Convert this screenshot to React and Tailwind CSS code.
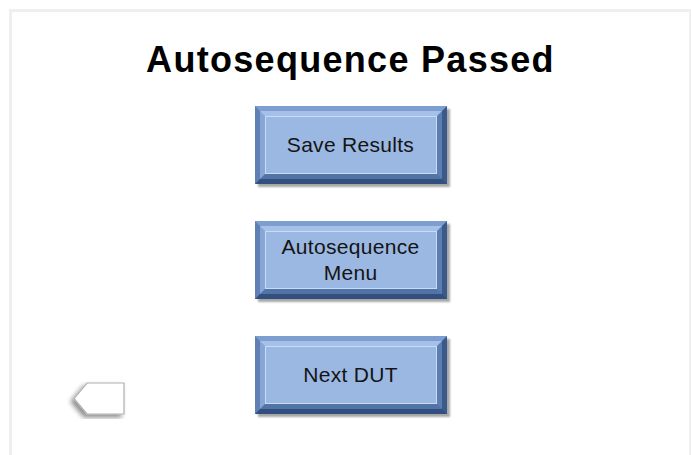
export default function App() {
  const buttons = [
    { label: 'Save Results' },
    { label: 'Autosequence', sub: 'Menu' },
    { label: 'Next DUT' },
  ]

  return (
    <div className="w-[691px] h-[455px] bg-white overflow-hidden pt-[9px] pl-[9px]" style={{ fontFamily: '"Liberation Sans", Arial, sans-serif' }}>
      <div className="h-[446px] border-t-[3px] border-l-[3px] border-r-[2px] border-[#efefef] bg-white flex flex-col items-center pt-[28px]">
        <h1 className="text-[36px] leading-[40px] font-bold text-black tracking-[1.3px]">Autosequence Passed</h1>

        <div className="flex flex-col gap-[37px] mt-[26px] w-full">
          {buttons.map((b, i) => (
            <div key={i} className="grid grid-cols-[1fr_auto_1fr] w-full">
              <div className="flex items-end pl-[54px]">
                {i === 2 && <BackArrow />}
              </div>
              <BevelButton label={b.label} sub={b.sub} />
              <div />
            </div>
          ))}
        </div>
      </div>
    </div>
  )
}

function BevelButton({ label, sub }) {
  return (
    <div className="w-[192px] h-[78px] border-[5px] border-t-[#7f9ed0] border-l-[#5f80b5] border-r-[#3a5a8c] border-b-[#324f7e] shadow-[3px_3px_2px_rgba(0,0,0,0.35)]">
      <div className="w-full h-full border-[5px] border-t-[#a6c0e9] border-l-[#87a5d5] border-r-[#5c7db0] border-b-[#5273a6]">
        <div className="w-full h-full bg-[#9bb8e3] border border-[#c9dcf6] flex flex-col items-center justify-center text-[21px] leading-[26px] text-[#141414] tracking-[0.3px]">
          <span>{label}</span>
          {sub && <span>{sub}</span>}
        </div>
      </div>
    </div>
  )
}

function BackArrow() {
  return (
    <svg width="62" height="38" viewBox="0 0 62 38" className="-mb-[5px]">
      <defs>
        <filter id="sh" x="-30%" y="-30%" width="160%" height="160%">
          <feGaussianBlur in="SourceAlpha" stdDeviation="2.5" />
          <feOffset dx="-3" dy="3" result="b" />
          <feComponentTransfer>
            <feFuncA type="linear" slope="0.45" />
          </feComponentTransfer>
          <feMerge>
            <feMergeNode />
            <feMergeNode in="SourceGraphic" />
          </feMerge>
        </filter>
      </defs>
      <polygon points="8,17.5 21,2 58,2 58,33 21,33" fill="#ffffff" stroke="#b0b0b0" strokeWidth="1.2" filter="url(#sh)" />
    </svg>
  )
}
